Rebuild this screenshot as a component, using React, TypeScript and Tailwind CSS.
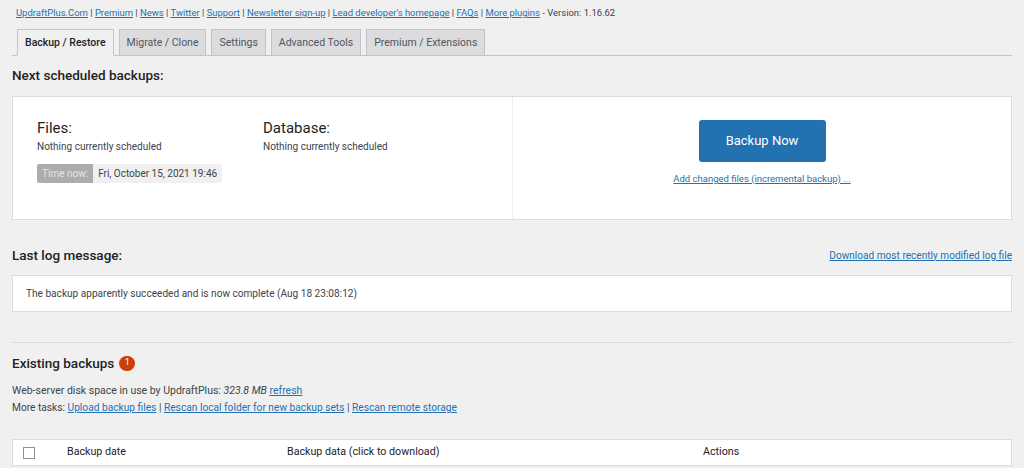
import React from 'react'

const LINKS = ['UpdraftPlus.Com', 'Premium', 'News', 'Twitter', 'Support', 'Newsletter sign-up', "Lead developer's homepage", 'FAQs', 'More plugins']
const TABS = ['Backup / Restore', 'Migrate / Clone', 'Settings', 'Advanced Tools', 'Premium / Extensions']

function A({ children }: { children: React.ReactNode }) {
  return <a className="text-[#2271b1] underline underline-offset-1 cursor-pointer">{children}</a>
}

export default function App() {
  return (
    <div className="w-[1024px] h-[468px] overflow-hidden bg-[#f0f0f1] text-[#3c434a] font-['Roboto',sans-serif]">
      <div className="px-[12px]">
        {/* top links */}
        <div className="pl-[4px] pt-[7px] text-[9.45px] leading-[12px]">
          {LINKS.map((l, i) => (
            <span key={l}>
              <A>{l}</A>
              {i < LINKS.length - 1 ? ' | ' : ''}
            </span>
          ))}
          {' - Version: 1.16.62'}
        </div>

        {/* tabs */}
        <div className="mt-[11px] flex items-end gap-[5px] pl-[5px] border-b border-[#c3c4c7] h-[26px]">
          {TABS.map((t, i) => (
            <div
              key={t}
              className={
                i === 0
                  ? 'h-[27px] -mb-px px-[7px] flex items-center border border-[#c3c4c7] border-b-[#f0f0f1] bg-[#f0f0f1] text-[10.5px] font-medium text-[#1d2327]'
                  : 'h-[26px] px-[7px] flex items-center border border-[#c3c4c7] border-b-0 bg-[#dcdcde] text-[10.5px] text-[#50575e]'
              }
            >
              {t}
            </div>
          ))}
        </div>

        {/* next scheduled */}
        <h2 className="mt-[11px] text-[13.5px] font-medium text-[#1d2327] leading-[16px]">Next scheduled backups:</h2>
        <div className="mt-[13px] h-[124px] bg-white border border-[#dcdcde] flex">
          <div className="w-[500px] border-r border-[#f0f0f1] pl-[24px] pt-[22px] flex flex-col">
            <div className="flex">
              <div className="w-[226px]">
                <div className="text-[15px] text-[#1d2327] leading-[18px]">Files:</div>
                <div className="mt-[3px] text-[10px] leading-[13px]">Nothing currently scheduled</div>
              </div>
              <div>
                <div className="text-[15px] text-[#1d2327] leading-[18px]">Database:</div>
                <div className="mt-[3px] text-[10px] leading-[13px]">Nothing currently scheduled</div>
              </div>
            </div>
            <div className="mt-[11px] flex h-[19px] text-[10px] w-fit rounded-[2px] overflow-hidden">
              <span className="bg-[#acacac] text-[#e6e6e6] px-[5px] flex items-center">Time now:</span>
              <span className="bg-[#f0f0f1] text-[#3c434a] px-[5px] flex items-center">Fri, October 15, 2021 19:46</span>
            </div>
          </div>
          <div className="flex-1 flex flex-col items-center pt-[23px]">
            <button className="w-[127px] h-[42px] bg-[#2271b1] text-white text-[13px] rounded-[3px]">Backup Now</button>
            <div className="mt-[11px] text-[9.5px] leading-[12px]">
              <A>Add changed files (incremental backup) ...</A>
            </div>
          </div>
        </div>

        {/* last log */}
        <div className="mt-[27px] flex items-center justify-between">
          <h2 className="text-[13.5px] font-medium text-[#1d2327] leading-[16px]">Last log message:</h2>
          <div className="text-[10.1px] leading-[13px]">
            <A>Download most recently modified log file</A>
          </div>
        </div>
        <div className="mt-[12px] h-[37px] bg-white border border-[#dcdcde] flex items-center pl-[13px] text-[10.1px]">
          The backup apparently succeeded and is now complete (Aug 18 23:08:12)
        </div>

        <div className="mt-[30px] border-t border-[#dcdcde]" />

        {/* existing backups */}
        <div className="mt-[12px] flex items-center gap-[5px]">
          <h2 className="text-[13.5px] font-medium text-[#1d2327] leading-[16px]">Existing backups</h2>
          <span className="w-[16px] h-[15px] rounded-full bg-[#c9400b] text-white text-[9px] flex items-center justify-center">1</span>
        </div>
        <div className="mt-[11px] leading-[17px]">
          <div className="text-[10.5px]">
            Web-server disk space in use by UpdraftPlus: <i>323.8 MB</i> <A>refresh</A>
          </div>
          <div className="text-[10.2px]">
            More tasks: <A>Upload backup files</A> | <A>Rescan local folder for new backup sets</A> | <A>Rescan remote storage</A>
          </div>
        </div>

        {/* table */}
        <div className="mt-[23px] bg-white border border-[#dcdcde] h-[27px] flex items-center text-[10.7px] text-[#1d2327]">
          <div className="w-[54px] pl-[10px]">
            <span className="block w-[12px] h-[12px] border border-[#8c8f94] bg-white" />
          </div>
          <div className="w-[220px]">Backup date</div>
          <div className="w-[335px]">Backup data (click to download)</div>
          <div className="flex-1 pl-[81px]">Actions</div>
        </div>
      </div>
    </div>
  )
}
